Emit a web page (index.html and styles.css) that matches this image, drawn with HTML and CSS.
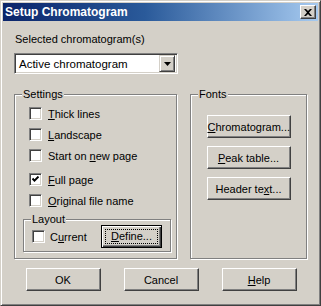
FILE: index.html
```html
<!DOCTYPE html>
<html lang="en">
<head>
  <meta charset="UTF-8">
  <title>Setup Chromatogram</title>
  <link rel="stylesheet" href="styles.css">
</head>
<body>

  <div class="window">
    <div class="titlebar">
      <span class="title">Setup Chromatogram</span>
      <button class="close-button" aria-label="Close">
        <svg width="8" height="7" viewBox="0 0 8 7">
          <path d="M0 0h2l2 2 2-2h2L5 3.5 8 7H6L4 5 2 7H0l3-3.5z" fill="#000"/>
        </svg>
      </button>
    </div>

    <div class="dialog-body">
      <div class="field-label">Selected chromatogram(s)</div>
      <div class="combo">
        <span class="combo-value">Active chromatogram</span>
        <span class="combo-arrow">
          <svg width="7" height="4" viewBox="0 0 7 4"><path d="M0 0h7L3.5 4z" fill="#000"/></svg>
        </span>
      </div>

      <div class="groups">
        <fieldset class="group settings">
          <legend>Settings</legend>
          <label class="check"><span class="box"></span><span><u>T</u>hick lines</span></label>
          <label class="check"><span class="box"></span><span><u>L</u>andscape</span></label>
          <label class="check"><span class="box"></span><span>Start on <u>n</u>ew page</span></label>
          <label class="check spaced">
            <span class="box">
              <svg width="7" height="7" viewBox="0 0 7 7"><path d="M0.5 2.5 2.5 4.6 6.5 0.6" fill="none" stroke="#000" stroke-width="2"/></svg>
            </span>
            <span><u>F</u>ull page</span>
          </label>
          <label class="check"><span class="box"></span><span><u>O</u>riginal file name</span></label>

          <fieldset class="group layout">
            <legend>Layout</legend>
            <div class="layout-row">
              <label class="check"><span class="box"></span><span>C<u>u</u>rrent</span></label>
              <button class="btn default define-button"><span class="focus"><u>D</u>efine...</span></button>
            </div>
          </fieldset>
        </fieldset>

        <fieldset class="group fonts">
          <legend>Fonts</legend>
          <button class="btn font-button"><u>C</u>hromatogram...</button>
          <button class="btn font-button"><u>P</u>eak table...</button>
          <button class="btn font-button">Header te<u>x</u>t...</button>
        </fieldset>
      </div>

      <div class="actions">
        <button class="btn action-button">OK</button>
        <button class="btn action-button">Cancel</button>
        <button class="btn action-button"><u>H</u>elp</button>
      </div>
    </div>
  </div>

</body>
</html>
```

FILE: styles.css
```css
body {
  margin: 0;
  background: #d4d0c8;
  font-family: 'Liberation Sans', Arial, sans-serif;
  font-size: 11px;
  color: #000;
}

.window {
  width: 321px;
  height: 306px;
  box-sizing: border-box;
  background: #d4d0c8;
  border: 1px solid;
  border-color: #d4d0c8 #404040 #404040 #d4d0c8;
  box-shadow: inset 1px 1px #fff, inset -1px -1px #808080;
  padding: 2px;
}

.titlebar {
  height: 18px;
  display: flex;
  align-items: center;
  justify-content: space-between;
  background: linear-gradient(to right, #0a246a 0%, #2a5a9a 45%, #a6caf0 100%);
  padding: 0 2px 0 2px;
}

.title {
  color: #fff;
  font-weight: bold;
  font-size: 12px;
}

.close-button {
  width: 16px;
  height: 14px;
  padding: 0;
  display: flex;
  align-items: center;
  justify-content: center;
  background: #d4d0c8;
  border: 1px solid;
  border-color: #fff #404040 #404040 #fff;
  box-shadow: inset -1px -1px #808080;
}

.dialog-body {
  padding: 12px 11px 0 11px;
}

.field-label {
  line-height: 13px;
  padding-left: 1px;
}

.combo {
  margin-top: 7px;
  width: 164px;
  height: 21px;
  box-sizing: border-box;
  display: flex;
  align-items: center;
  background: #fff;
  border: 1px solid;
  border-color: #808080 #fff #fff #808080;
  box-shadow: inset 1px 1px #404040, inset -1px -1px #d4d0c8;
  padding: 2px;
}

.combo-value {
  flex: 1;
  padding-left: 2px;
  font-size: 11.5px;
}

.combo-arrow {
  width: 16px;
  height: 17px;
  box-sizing: border-box;
  display: flex;
  align-items: center;
  justify-content: center;
  background: #d4d0c8;
  border: 1px solid;
  border-color: #d4d0c8 #404040 #404040 #d4d0c8;
  box-shadow: inset 1px 1px #fff, inset -1px -1px #808080;
}

.groups {
  margin-top: 14px;
  display: grid;
  grid-template-columns: 163px 117px;
  gap: 13px;
}

.group {
  margin: 0;
  min-width: 0;
  border: 1px solid #808080;
  box-shadow: inset 1px 1px #fff, 1px 1px #fff;
}

.group legend {
  line-height: 12px;
  padding: 0 1px;
  margin-left: -1px;
  background: #d4d0c8;
}

.settings {
  padding: 7px 5px 6px 8px;
  display: flex;
  flex-direction: column;
  gap: 8px;
}

.settings > .check {
  padding-left: 6px;
}

.check {
  display: flex;
  align-items: center;
  gap: 6px;
  height: 13px;
}

.check.spaced {
  margin-top: 3px;
}

.box {
  width: 13px;
  height: 13px;
  box-sizing: border-box;
  flex: none;
  display: flex;
  align-items: center;
  justify-content: center;
  background: #fff;
  border: 1px solid;
  border-color: #808080 #fff #fff #808080;
  box-shadow: inset 1px 1px #404040, inset -1px -1px #d4d0c8;
}

.layout {
  margin-top: -2px;
  padding: 0 8px 3px 8px;
}

.layout-row {
  display: flex;
  align-items: center;
  height: 23px;
}

.layout-row .check {
  gap: 5px;
}

.btn {
  font-family: inherit;
  font-size: 11px;
  color: #000;
  background: #d4d0c8;
  border: 1px solid;
  border-color: #fff #404040 #404040 #fff;
  box-shadow: inset -1px -1px #808080;
  padding: 0;
  height: 23px;
  box-sizing: border-box;
}

.btn.default {
  border-color: #000;
  box-shadow: inset 1px 1px #fff, inset -1px -1px #404040, inset -2px -2px #808080;
}

.define-button {
  margin-left: auto;
  width: 61px;
  display: flex;
  padding: 3px;
}

.focus {
  flex: 1;
  border: 1px dotted #000;
  line-height: 13px;
}

.fonts {
  padding: 15px 8px 0 8px;
  display: flex;
  flex-direction: column;
  align-items: center;
  gap: 8px;
}

.font-button {
  width: 84px;
}

.actions {
  margin-top: 9px;
  display: flex;
  justify-content: center;
  gap: 23px;
  padding-left: 1px;
}

.action-button {
  width: 75px;
}
```
